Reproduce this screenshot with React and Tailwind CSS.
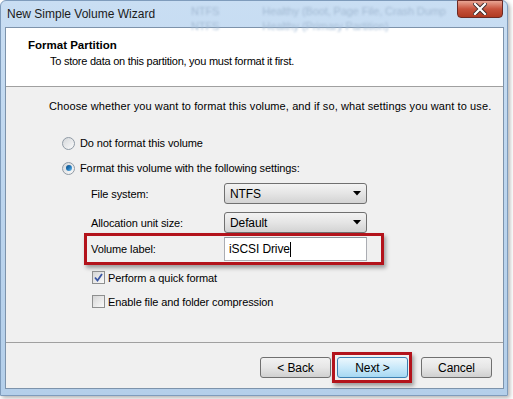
import React from 'react';

const font = { fontFamily: '"Liberation Sans", Arial, sans-serif' };

const Radio = ({ checked }) => (
    <span className="relative flex items-center justify-center w-[13px] h-[13px] rounded-full border border-[#8f9aa5] bg-gradient-to-br from-[#d4d7da] to-[#fbfbfb]">
        {checked && (
            <span className="w-[6px] h-[6px] rounded-full bg-gradient-to-br from-[#0b4d82] via-[#1f75b8] to-[#6cc2ef]" />
        )}
    </span>
);

const Checkbox = ({ checked }) => (
    <span className="flex items-center justify-center w-[13px] h-[13px] border border-[#8e8f8f] bg-gradient-to-br from-[#d6d6d6] to-[#fafafa]">
        {checked && (
            <svg width="9" height="9" viewBox="0 0 9 9">
                <path d="M1 4.5 L3.5 7.5 L8 1" fill="none" stroke="#3a56a4" strokeWidth="1.8" />
            </svg>
        )}
    </span>
);

const Combo = ({ value }) => (
    <div className="flex items-center justify-between w-[143px] h-[21px] pl-[5px] pr-[5px] rounded-[3px] border border-[#707070] bg-gradient-to-b from-[#f3f3f3] via-[#e5e5e5] to-[#d3d3d3]">
        <span className="text-[12px]">{value}</span>
        <svg width="8" height="5" viewBox="0 0 8 5">
            <path d="M0 0 H8 L4 4.5 Z" fill="#000" />
        </svg>
    </div>
);

const Button = ({ children, focused }) => (
    <button
        className={
            focused
                ? 'w-[71px] h-[21px] rounded-[3px] border border-[#3c7fb1] bg-gradient-to-b from-[#ecf7fd] via-[#c9e9fa] to-[#a7d8f2] text-black text-[12px]'
                : 'w-[71px] h-[21px] rounded-[3px] border border-[#707070] bg-gradient-to-b from-[#f2f2f2] via-[#e6e6e6] to-[#d0d0d0] text-black text-[12px]'
        }
    >
        {children}
    </button>
);

export default function App() {
    return (
        <div className="w-[513px] h-[399px] bg-white text-[11px] leading-[14px] tracking-[-0.1px] text-black" style={font}>
            {/* Window frame */}
            <div className="w-[508px] h-[396px] rounded-t-[6px] border border-[#7f9cbc] bg-gradient-to-b from-[#c9def3] via-[#bcd5ee] to-[#b4cfea] shadow-[2px_2px_4px_rgba(0,0,0,0.3)] flex flex-col">
                {/* Title bar */}
                <div className="relative h-[26px] flex items-start">
                    <div className="absolute left-[150px] top-[3px] blur-[1px] text-[#a3bad3] whitespace-nowrap">
                        <span className="ml-[40px]">NTFS</span>
                        <span className="ml-[43px]">Healthy (Boot, Page File, Crash Dump</span>
                    </div>
                    <div className="absolute left-[150px] top-[18px] blur-[1px] text-[#a6bdd5] whitespace-nowrap">
                        <span className="ml-[40px]">NTFS</span>
                        <span className="ml-[43px]">Healthy (Primary Partition)</span>
                    </div>
                    <span className="relative pl-[6px] pt-[6px] text-[12px] tracking-normal text-[#1b1b1b]">New Simple Volume Wizard</span>
                    <div className="relative ml-auto mr-[4px] mt-[-1px] w-[46px] h-[18px] rounded-b-[4px] border border-[#6d2a24] bg-gradient-to-b from-[#e8a493] via-[#c7523c] to-[#b03a22] flex items-center justify-center">
                        <svg width="14" height="12" viewBox="0 0 14 12">
                            <path d="M2 1 L12 11 M12 1 L2 11" stroke="#3a2a2a" strokeWidth="4" strokeLinecap="square" />
                            <path d="M2 1 L12 11 M12 1 L2 11" stroke="#ffffff" strokeWidth="2.2" strokeLinecap="square" />
                        </svg>
                    </div>
                </div>

                {/* Client area */}
                <div className="ml-[4px] w-[499px] h-[362px] border border-[#7d93ab] bg-[#f0f0f0] flex flex-col">
                    {/* Header */}
                    <div className="h-[59px] bg-white border-b border-[#a0a0a0] pl-[22px] pt-[10px]">
                        <div className="font-bold text-[11.5px] tracking-normal">Format Partition</div>
                        <div className="mt-[2px] pl-[22px] tracking-[-0.25px]">To store data on this partition, you must format it first.</div>
                    </div>

                    {/* Body */}
                    <div className="flex-1 pl-[43px] pt-[12px]">
                        <div className="whitespace-nowrap tracking-[0.1px]">Choose whether you want to format this volume, and if so, what settings you want to use.</div>

                        <div className="mt-[23px] pl-[13px] flex items-center gap-[5px] h-[14px]">
                            <Radio />
                            <span>Do not format this volume</span>
                        </div>
                        <div className="mt-[11px] pl-[13px] flex items-center gap-[5px] h-[14px]">
                            <Radio checked />
                            <span>Format this volume with the following settings:</span>
                        </div>

                        <div className="mt-[8px] pl-[42px] flex items-center h-[21px]">
                            <span className="w-[133px]">File system:</span>
                            <Combo value="NTFS" />
                        </div>
                        <div className="mt-[8px] pl-[42px] flex items-center h-[21px]">
                            <span className="w-[133px]">Allocation unit size:</span>
                            <Combo value="Default" />
                        </div>

                        <div className="ml-[35px] mt-[0px] w-[300px] h-[32px] border-[3px] border-[#b3131b] shadow-[2px_3px_4px_rgba(0,0,0,0.35)] flex items-center pl-[4px]">
                            <span className="w-[133px]">Volume label:</span>
                            <div className="w-[143px] h-[24px] bg-white border border-[#abadb3] border-t-[#8e949c] flex items-center pl-[4px]">
                                <span className="text-[12px]">iSCSI Drive</span>
                                <span className="w-px h-[15px] bg-black" />
                            </div>
                        </div>

                        <div className="mt-[6px] pl-[43px] flex items-center gap-[3px] h-[13px]">
                            <Checkbox checked />
                            <span>Perform a quick format</span>
                        </div>
                        <div className="mt-[11px] pl-[43px] flex items-center gap-[3px] h-[13px]">
                            <Checkbox />
                            <span>Enable file and folder compression</span>
                        </div>
                    </div>

                    {/* Buttons */}
                    <div className="h-[46px] border-t border-[#a0a0a0] flex items-start justify-end pr-[11px] pt-[14px]">
                        <Button>&lt; Back</Button>
                        <div className="relative ml-[6px]">
                            <div className="absolute -left-[5px] -top-[5px] w-[80px] h-[31px] border-[3px] border-[#b3131b] shadow-[2px_3px_4px_rgba(0,0,0,0.35)]" />
                            <Button focused>Next &gt;</Button>
                        </div>
                        <div className="ml-[13px]">
                            <Button>Cancel</Button>
                        </div>
                    </div>
                </div>
            </div>
        </div>
    );
}
